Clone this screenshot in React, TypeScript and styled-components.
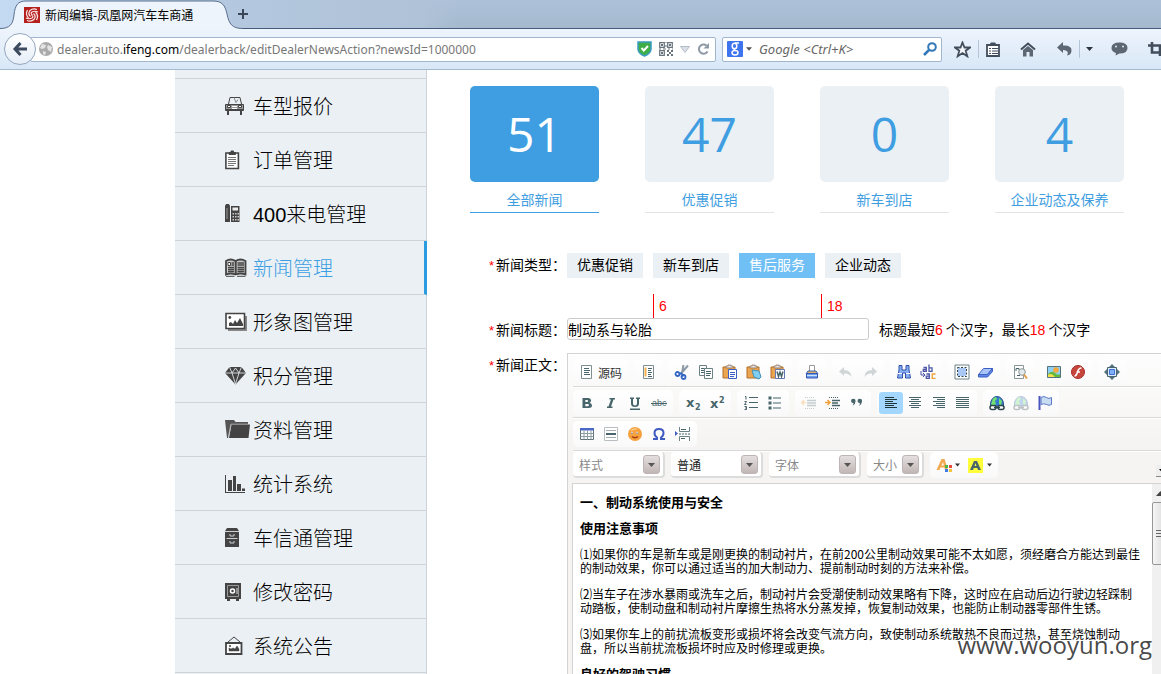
import React from "react";
import styled, { createGlobalStyle } from "styled-components";

const CJK = `"Noto Sans CJK SC", sans-serif`;

const GlobalStyle = createGlobalStyle`
  * { box-sizing: border-box; }
  body {
    margin: 0;
    background: #fff;
    color: #000;
    font-family: "Liberation Sans", ${CJK};
    font-size: 14px;
    overflow: hidden;
  }
  a { color: inherit; text-decoration: none; }
  button, input, select { font: inherit; color: inherit; margin: 0; }
  button { border: 0; padding: 0; background: none; cursor: pointer; }
  svg { display: block; flex: none; }
`;

/* ---------- browser frame ---------- */

const Browser = styled.div`
  height: 100vh;
  display: flex;
  flex-direction: column;
  overflow: hidden;
`;

const TabStrip = styled.div`
  flex: none;
  height: 29px;
  display: flex;
  align-items: stretch;
  background: linear-gradient(90deg, #c3daf2 0, #b3c7de 240px, #afc2d8 420px, rgba(175, 194, 216, 0) 460px),
    linear-gradient(#aec1da, #a4b9cd);
  border-bottom: 1px solid #455a7c;
`;

const Tab = styled.div`
  position: relative;
  width: 234px;
  height: 29px;
  padding-left: 24px;
  display: flex;
  align-items: center;
  gap: 5px;
  font-family: ${CJK};
  font-size: 12px;
`;

const TabShape = styled.svg`
  position: absolute;
  left: 0;
  top: 0;
`;

const TabIcon = styled.svg`
  position: relative;
`;

const TabTitle = styled.span`
  position: relative;
`;

const NewTab = styled.button`
  display: flex;
  align-items: center;
  padding: 0 4px;
`;

const NavBar = styled.div`
  flex: none;
  height: 41px;
  display: flex;
  align-items: center;
  padding-left: 4px;
  background: linear-gradient(#eef4fc, #d8e7f7);
  border-bottom: 1px solid #a6bbd0;
`;

const BackButton = styled.button`
  position: relative;
  z-index: 1;
  flex: none;
  width: 32px;
  height: 32px;
  border-radius: 50%;
  border: 1px solid #95a8bf;
  background: linear-gradient(#fff, #e6eef8);
  display: flex;
  align-items: center;
  justify-content: center;
`;

const Field = styled.div`
  height: 25px;
  display: flex;
  align-items: center;
  background: #fff;
  border: 1px solid #a2b6cd;
  border-radius: 2px;
  font-family: "Noto Sans", sans-serif;
  font-size: 12px;
  color: #777;
`;

const UrlField = styled(Field)`
  flex: 1;
  min-width: 0;
  margin-left: -6px;
  padding: 0 5px 0 8px;
  gap: 4px;
`;

const Url = styled.div`
  flex: 1;
  min-width: 0;
  overflow: hidden;
  white-space: nowrap;
  b { font-weight: 400; color: #000; }
`;

const UrlTools = styled.div`
  display: flex;
  align-items: center;
  gap: 7px;
`;

const SearchField = styled(Field)`
  flex: none;
  width: 220px;
  margin-left: 6px;
  padding: 0 4px;
  gap: 3px;
  font-size: 13px;
`;

const SearchInput = styled.input`
  flex: 1;
  min-width: 0;
  border: 0;
  padding: 0 0 0 4px;
  outline: 0;
  background: none;
  &::placeholder { color: #666; font-style: italic; opacity: 1; }
`;

const ToolIcons = styled.div`
  flex: none;
  width: 219px;
  padding-left: 12px;
  display: flex;
  align-items: center;
  overflow: hidden;
`;

const ToolButton = styled.button<{ $gap: number }>`
  flex: none;
  margin-right: ${(p) => p.$gap}px;
`;

const ToolDivider = styled.span<{ $gap: number }>`
  flex: none;
  width: 1px;
  height: 18px;
  background: #b4c5d8;
  margin-right: ${(p) => p.$gap}px;
`;

/* ---------- page ---------- */

const Viewport = styled.div`
  position: relative;
  flex: 1;
  min-height: 0;
  overflow: hidden;
`;

const Page = styled.div`
  min-width: 1176px;
  min-height: 100%;
  display: flex;
  padding-left: 175px;
`;

const Sidebar = styled.nav`
  flex: none;
  width: 252px;
  padding-top: 8px;
  background: #ebf0f4;
  border-right: 1px solid #d0d3d5;
`;

const MenuList = styled.ul`
  list-style: none;
  margin: 0 -1px 0 0;
  padding: 0;
  border-top: 1px solid #d0d3d5;
`;

const MenuLink = styled.a<{ $active?: boolean }>`
  display: grid;
  grid-template-columns: 28px 1fr;
  align-items: center;
  height: 54px;
  padding-left: 50px;
  border-bottom: 1px solid #d0d3d5;
  border-right: ${(p) => (p.$active ? "3px solid #2c9be0" : "0")};
  color: ${(p) => (p.$active ? "#3d9fe3" : "#000")};
  font-size: 20px;
  font-weight: 300;
`;

const Main = styled.main`
  flex: 1;
  min-width: 0;
  padding-top: 16px;
`;

const Cards = styled.div`
  display: flex;
  gap: 46px;
  padding-left: 43px;
`;

const Card = styled.a<{ $active?: boolean }>`
  flex: none;
  width: 129px;
  height: 127px;
  display: flex;
  flex-direction: column;
  color: #3f9ee1;
  text-align: center;
  line-height: 20px;
  border-bottom: 1px solid ${(p) => (p.$active ? "#3f9ee1" : "#e2e5e7")};
`;

const CardCount = styled.strong<{ $active?: boolean }>`
  height: 96px;
  margin-bottom: 8px;
  border-radius: 5px;
  background: ${(p) => (p.$active ? "#3f9ee1" : "#ebf0f4")};
  color: ${(p) => (p.$active ? "#fff" : "#3f9ee1")};
  font: 400 48px/96px "Open Sans", sans-serif;
`;

const FormGrid = styled.form`
  display: grid;
  grid-template-columns: 139px minmax(0, 1fr);
  column-gap: 1px;
  margin-top: 40px;
`;

const Caption = styled.label`
  height: 25px;
  line-height: 25px;
  text-align: right;
  white-space: nowrap;
  &::before { content: "*"; color: #f00; margin-right: 2px; font-size: 13px; }
`;

const TypeRow = styled.div`
  display: flex;
  gap: 10px;
  margin-bottom: 16px;
`;

const TypeButton = styled.button<{ $active?: boolean }>`
  width: 76px;
  height: 25px;
  line-height: 25px;
  background: ${(p) => (p.$active ? "#70c0f6" : "#ebf0f4")};
  color: ${(p) => (p.$active ? "#fff" : "#000")};
`;

const Ruler = styled.div`
  grid-column: 2;
  display: flex;
  height: 24px;
  padding-left: 86px;
`;

const RulerMark = styled.span`
  width: 168px;
  padding-left: 5px;
  border-left: 1px solid #f00;
  color: #f00;
  line-height: 25px;
`;

const TitleRow = styled.div`
  display: flex;
  align-items: center;
  gap: 10px;
  height: 22px;
  margin-bottom: 13px;
  white-space: nowrap;
  em { color: #f00; font-style: normal; margin-right: 3px; }
`;

const TitleInput = styled.input`
  width: 302px;
  height: 22px;
  padding: 0;
  border: 1px solid #ccc;
  border-radius: 3px;
  outline: 0;
`;

/* ---------- rich text editor ---------- */

const Editor = styled.div`
  height: 500px;
  display: flex;
  flex-direction: column;
  padding: 0 5px 5px 4px;
  border: 1px solid #d3d3d3;
  background: linear-gradient(#fdfdfd, #f5f4f2 90px);
`;

const ToolRow = styled.div<{ $last?: boolean }>`
  flex: none;
  display: flex;
  gap: 6px;
  height: 31px;
  padding-top: ${(p) => (p.$last ? 0 : 2)}px;
  margin: 0 -5px 0 1px;
  border-top: 1px solid #fff;
  border-bottom: ${(p) => (p.$last ? "0" : "1px solid #d9d9d9")};
  &:first-child { height: 33px; padding: 4px 0 0; }
  &:nth-child(3) { height: 33px; }
`;

const Group = styled.div`
  display: flex;
  height: 26px;
  padding: 2px;
  border-radius: 5px;
  background: linear-gradient(#fff, #f9f9f9);
`;

const EditorButton = styled.button<{ $on?: boolean; $off?: boolean }>`
  display: flex;
  align-items: center;
  gap: 3px;
  padding: 0 4px;
  border-radius: 3px;
  font-size: 12px;
  color: #333;
  background: ${(p) => (p.$on ? "#a3d7ff" : "none")};
  svg { opacity: ${(p) => (p.$off ? 0.3 : 1)}; }
`;

const Combo = styled.label<{ $width: number }>`
  position: relative;
  width: ${(p) => p.$width}px;
  height: 26px;
  border-radius: 4px;
  border-right: 2px solid #dcdcdc;
  border-bottom: 2px solid #dcdcdc;
  background: #fff;
`;

const ComboSelect = styled.select<{ $dark?: boolean }>`
  appearance: none;
  width: 100%;
  height: 24px;
  padding: 0 0 0 6px;
  border: 0;
  outline: 0;
  background: none;
  font-family: ${CJK};
  font-size: 12px;
  color: ${(p) => (p.$dark ? "#222" : "#888")};
`;

const ComboArrow = styled.span`
  position: absolute;
  top: 3px;
  right: 3px;
  width: 17px;
  height: 19px;
  padding: 7px 4px;
  border: 1px solid #bdb5b5;
  border-radius: 3px;
  background: linear-gradient(#e5dfdf, #c1b6b6);
  pointer-events: none;
`;

const Collapse = styled.button`
  display: flex;
  align-items: center;
  justify-content: center;
  width: 13px;
  height: 12px;
  margin: 13px 6px 0 auto;
  border-right: 1px solid #888;
  border-bottom: 1px solid #888;
  background: #eee;
`;

const EditArea = styled.div`
  flex: 1;
  min-height: 0;
  display: flex;
  margin-top: 1px;
  border: 1px solid #d3d3d3;
  background: #fff;
`;

const Article = styled.article`
  flex: 1;
  min-width: 0;
  padding: 11px 10px 11px 7px;
  overflow: hidden;
  font-family: ${CJK};
  font-size: 12px;
  line-height: 14px;
  p, h3 { margin: 0 0 12px; }
  h3 { font-size: 13px; line-height: 14px; }
`;

const ScrollTrack = styled.div`
  flex: none;
  width: 17px;
  display: flex;
  flex-direction: column;
  background: #f0f0f0;
`;

const ScrollArrow = styled.svg`
  margin: 7px 4px 6px;
`;

const ScrollThumb = styled.div`
  height: 63px;
  border: 1px solid #979797;
  border-radius: 2px;
  background: linear-gradient(90deg, #f5f5f5, #d5d5d5);
  display: flex;
  align-items: center;
  justify-content: center;
`;

const Watermark = styled.div`
  position: absolute;
  right: 9px;
  bottom: 13px;
  font: 400 24px/32px "Open Sans", sans-serif;
  color: rgba(50, 50, 50, 0.9);
  pointer-events: none;
`;

/* ---------- drawings ---------- */

const INK = "#444";

const menuIcons: Record<string, React.ReactNode> = {
  car: (
    <g fill="none" stroke={INK}>
      <path d="M3.500 8 5 1.500H15L16.500 8" />
      <path d="M9 1.500l2 5 2-3" stroke="#888" />
      <path d="M.5 8.500h18v5H.5z" fill="#999" />
      <path d="M.5 13.500h18v1H.5z" fill={INK} />
      <path d="M3 15v4M16 15v4" strokeWidth="2" />
      <path d="M7 10.500h5M7 12.500h5" stroke="#fff" />
      <path d="M2.500 9.500h3v2h-3zM13.500 9.500h3v2h-3z" fill="#fff" />
    </g>
  ),
  clipboard: (
    <g fill="none" stroke={INK}>
      <path d="M.9 3h12.500v15.500H.9z" strokeWidth="1.600" fill="#fff" />
      <path d="M4 4.500V2.500h2V1h2.500v1.500h2v2z" fill={INK} />
      <path d="M3 7.500h8M3 9.500h8M3 11.500h8M3 13.500h8M3 15.500h6" stroke="#777" />
    </g>
  ),
  phone: (
    <g>
      <path d="M0 2 1 0h3l1 2v16H0z" fill={INK} />
      <path d="M6 2h8.500v16H6z" fill={INK} />
      <path d="M7.500 3.500h5.500v3H7.500z" fill="#eee" />
      <path d="M7.500 9h1.500v1.500H7.500zM10 9h1.500v1.500H10zM12.500 9H14v1.500h-1.500zM7.500 12h1.500v1.500H7.500zM10 12h1.500v1.500H10zM12.500 12H14v1.500h-1.500zM7.500 15h1.500v1.500H7.500zM10 15h1.500v1.500H10zM12.500 15H14v1.500h-1.500z" fill="#ccc" />
      <path d="M2 4v11" stroke="#999" />
    </g>
  ),
  book: (
    <g fill="none" stroke={INK}>
      <path d="M1 3Q5.500 0 10.500 3 15.500 0 20.500 3v13.500Q15.500 14.500 10.500 16.500 5.500 14.500 1 16.500z" strokeWidth="1.800" fill="#ccc" />
      <path d="M10.700 2.500v14" strokeWidth="2" />
      <path d="M3 4.500h2.500v3H3z" fill="#fff" />
      <path d="M6.500 5H9M6.500 7H9M3 9.500h6M3 11.500h6M3 13.500h6M12.500 5H19M12.500 7H19M12.500 9.500H19M12.500 11.500H19M12.500 13.500H19" strokeWidth="1.300" />
      <path d="M1 18.300h8.500M12 18.300h8.500" />
    </g>
  ),
  image: (
    <g>
      <path d="M3 4h19v15H3z" fill="#888" />
      <path d="M1 1.500h18.500v15H1z" fill="#fff" stroke={INK} strokeWidth="1.600" />
      <path d="M4 14v-3l2-1 2 2 2-4 2 3 3-5 3 6v2z" fill={INK} />
      <circle cx="4.800" cy="5.500" r="1.400" fill={INK} />
    </g>
  ),
  gem: (
    <g>
      <path d="M4.500 1h12L21 7 10.500 18.500 0 7z" fill={INK} />
      <path d="M0 7h21M4.500 1 7 7l3.500 11L14 7l2.500-6M7 7l3.500-5L14 7" fill="none" stroke="#dde2e6" strokeWidth=".9" />
    </g>
  ),
  folder: (
    <g>
      <path d="M0 0h9l1.500 2H23v3H6L3 18H2z" fill="#555" />
      <path d="M6.500 4.500H25L23.500 18H4z" fill={INK} />
      <path d="M3.500 17 5.800 4.200H23" stroke="#bbb" fill="none" strokeWidth=".8" />
    </g>
  ),
  chart: (
    <g fill={INK}>
      <path d="M0 1h1v18H0zM0 18h20v1H0zM3 6h4v11H3zM8 2h3v15H8zM12 10h4v7h-4zM17 14.500h3V17h-3z" />
    </g>
  ),
  cabinet: (
    <g>
      <path d="M0 3 2 0h10l2 3v16H0z" fill={INK} />
      <path d="M0 3.500h14M1.500 10.500h11M5 6v2h4V6M5 13v2h4v-2" fill="none" stroke="#ccd0d3" />
    </g>
  ),
  safe: (
    <g>
      <path d="M0 1h16v16H0zM2 17h3v2H2zM11 17h3v2h-3z" fill={INK} />
      <path d="M2.500 3.500h11v11h-11z" fill="none" stroke="#999" />
      <circle cx="7.500" cy="9" r="2" fill="none" stroke="#fff" strokeWidth="1.500" />
      <path d="M12 6v6" stroke="#ddd" />
    </g>
  ),
  frame: (
    <g fill="none" stroke={INK}>
      <path d="M3 6 9 1l6 5" />
      <path d="M1 7h15.500v11H1z" strokeWidth="1.800" fill="#fff" />
      <path d="M4 15v-3l2 1 2-1 2 1 2-3 2 3v2z" fill={INK} strokeWidth=".5" />
      <circle cx="5" cy="10" r=".7" />
    </g>
  ),
};

const MenuIcon = ({ name }: { name: string }) => (
  <svg width="26" height="20" viewBox="0 0 26 20">{menuIcons[name]}</svg>
);

const SLATE = "#47656a";
const doc = (
  <>
    <path d="M2.500 1.500h10v13h-10z" fill="#fff" stroke="#7d8f92" />
    <path d="M5 4.500h5M5 6.500h6M5 8.500h5M5 10.500h6" stroke={SLATE} />
  </>
);
const pasteBoard = (
  <>
    <path d="M1 3h12v11H1z" fill="#e9a550" stroke="#b36f2b" />
    <path d="M4 4V2h2V1h3v1h2v2z" fill="#ddd" stroke="#8a6a4a" strokeWidth=".7" />
  </>
);
const chain = (
  <g fill="#fff" stroke="#2c4548" strokeWidth="1.500">
    <rect x="1" y="10.500" width="6" height="4" rx="2" />
    <rect x="9" y="10.500" width="6" height="4" rx="2" />
    <path d="M5 12.500h6" />
  </g>
);
const globe = (
  <>
    <path d="M1.500 9a6.500 7.500 0 0 1 13 0v2h-13z" fill="#3779cf" stroke="#28508f" />
    <path d="M4 3.500 7 2l1 2-2 2 1 3-3 2-2-2zM10 3l3 3-1 5-2-2z" fill="#71e06f" />
  </>
);

const editorIcons: Record<string, React.ReactNode> = {
  source: doc,
  template: (
    <>
      <path d="M3.500 1.500h10v13h-10z" fill="#fff" stroke="#7d8f92" />
      <path d="M4.500 3.500h2v9h-2z" fill="#f2b04e" />
      <path d="M8 4.500h4M8 6.500h3M8 8.500h4M8 10.500h3M8 12.500h4" stroke={SLATE} />
    </>
  ),
  cut: (
    <g fill="none">
      <path d="M7.500 9 14 1.500M8 9 9.500 1" stroke="#8c9aa5" strokeWidth="2" />
      <path d="M8 9 5 10M8 9.500l1 3" stroke="#3566c4" strokeWidth="2" />
      <circle cx="3.500" cy="10" r="2" stroke="#3566c4" strokeWidth="1.800" />
      <circle cx="9.500" cy="13" r="2" stroke="#3566c4" strokeWidth="1.800" />
    </g>
  ),
  copy: (
    <>
      <path d="M1.500 1.500h7v10h-7z" fill="#fff" stroke="#6c8286" />
      <path d="M3 4.500h4M3 6.500h3M3 8.500h3" stroke={SLATE} />
      <path d="M6.500 4.500h8v10h-8z" fill="#fff" stroke="#6c8286" />
      <path d="M8 7.500h5M8 9.500h5M8 11.500h4" stroke={SLATE} />
    </>
  ),
  paste: (
    <>
      {pasteBoard}
      <path d="M6.500 5.500h8v9h-8z" fill="#fff" stroke="#3c5fc4" />
      <path d="M8 8.500h5M8 10.500h5M8 12.500h4" stroke="#3c5fc4" />
    </>
  ),
  pasteText: (
    <>
      {pasteBoard}
      <path d="m6 6 7 1 2 6-2 2-5-2z" fill="#7fcdef" stroke="#4592b4" />
    </>
  ),
  pasteWord: (
    <>
      {pasteBoard}
      <path d="M5.500 5.500h9v9h-9z" fill="#fff" stroke="#6379b5" />
      <path d="m7 7.500 1.500 5L10 8l1.500 4.500 1.500-5" fill="none" stroke={SLATE} strokeWidth="1.500" />
    </>
  ),
  print: (
    <>
      <path d="M5.500 1.500h5v6h-5z" fill="#fff" stroke="#999" />
      <path d="M4 7h8l2 3H2z" fill="#d9b26c" stroke="#3b61b8" />
      <path d="M2.500 9.500h11v4.500h-11z" fill="#6f9dec" stroke="#3459b5" />
      <path d="M3 11.500h10" stroke="#cfe0fb" />
    </>
  ),
  undo: <path d="M1 7.500 6 3v3q7 0 7.500 7Q11 9 6 9.500V12z" fill="#6d7f82" />,
  redo: <path d="M15 7.500 10 3v3q-7 0-7.500 7Q5 9 10 9.500V12z" fill="#6d7f82" />,
  find: (
    <>
      <path d="M3 1.500h3V6h4V1.500h3V6l1.500 8h-5V9h-3v5h-5L3 6z" fill="#86aef2" stroke="#3150a8" />
      <path d="M2 9.500h4M10 9.500h4" stroke="#fff" />
    </>
  ),
  replace: (
    <g fill="none" stroke="#4a55a8" strokeWidth="1.300">
      <path d="M3.500 3.500h2.800v3.800H3.300V5.500h3M9 .5v6.800h3V3.800H9" />
      <path d="M6.500 10h2.800v4.300H6.300v-2.200h3" />
      <path d="M15.500 10h-3.300v4.300h3.300" stroke="#f0a136" />
      <path d="M1 7v4h3.500M3 9l2 2-2 2" strokeWidth="1" />
    </g>
  ),
  selectAll: (
    <>
      <path d="M1 1h14v14H1z" fill="#fff" stroke="#6c8286" />
      <path d="M4 4h8v8H4z" fill="#a9c7f5" />
      <path d="M3.500 3.500h9v9h-9z" fill="none" stroke="#2d4447" strokeDasharray="2 1.500" />
    </>
  ),
  eraser: (
    <>
      <path d="M5.500 4.500h9l-5 6h-9z" fill="#a9c4f8" stroke="#3c5fc4" />
      <path d="M.5 10.500h9l5-6v3l-5 5.500h-9z" fill="#5f87e6" stroke="#3c5fc4" />
    </>
  ),
  preview: (
    <>
      <path d="M2.500 1.500h9v13h-9z" fill="#fff" stroke="#8b9698" />
      <path d="M4 7V4.500h3V6M5 11.500h3" stroke={SLATE} fill="none" />
      <circle cx="10" cy="8" r="3.300" fill="#e4eaec" stroke="#8b9698" />
      <path d="m12 10.500 3 4" stroke="#e2a04b" strokeWidth="2" />
    </>
  ),
  picture: (
    <>
      <path d="M1.500 2.500h13v11h-13z" fill="#8fd0f5" stroke="#55717a" />
      <circle cx="10" cy="6" r="2.800" fill="#f9a93b" />
      <path d="M2 10Q6 6 9 9t5 1v3H2z" fill="#63b93e" />
      <path d="M2 10.500q4-2 7 2.500H2z" fill="#f4e04d" />
    </>
  ),
  flash: (
    <>
      <circle cx="8" cy="8" r="6.500" fill="#c8453b" stroke="#a52f2a" />
      <path d="M11.500 4Q8.500 4 7.500 8 6.500 12 4.500 12M6.500 8H10" fill="none" stroke="#fff" strokeWidth="1.500" />
    </>
  ),
  maximize: (
    <>
      <path d="M8 0l3 3H5zM8 16l3-3H5zM0 8l3-3v6zM16 8l-3-3v6z" fill="#55717a" />
      <path d="M3.500 3.500h9v9h-9z" fill="#dcebff" stroke="#47656a" />
      <path d="M5.500 5.500h5v5h-5z" fill="#7fb0f5" stroke="#3c6fd0" />
    </>
  ),
  bold: <path d="M3.500 3h5.500q3 0 3 2.500 0 1.700-1.500 2.300Q13 8.500 13 10.500 13 13 9.500 13h-6zM6.300 5v2H8q1.200 0 1.200-1T8 5zm0 4v2.200h2Q10 11.200 10 10T8.300 9z" fill={SLATE} fillRule="evenodd" />,
  italic: <path d="M6.500 3H12v1.500h-1.500l-2.500 7h1.500V13H4v-1.500h1.500l2.500-7H6.500z" fill={SLATE} />,
  underline: <path d="M3 2.500h4V4H6v4.500q0 2 2 2t2-2V4H9V2.500h4V4h-1v4.500Q12 12 8 12T4 8.500V4H3zM3 13.500h10V15H3z" fill={SLATE} />,
  strike: (
    <g fontFamily="Liberation Sans, sans-serif" fontSize="9" fill={SLATE}>
      <text x="1" y="11">abc</text>
      <path d="M0 8h16v1H0z" />
    </g>
  ),
  sub: (
    <g fontFamily="DejaVu Sans, sans-serif" fontWeight="700" fill={SLATE}>
      <text x="1" y="12" fontSize="13">x</text>
      <text x="10" y="15" fontSize="8">2</text>
    </g>
  ),
  sup: (
    <g fontFamily="DejaVu Sans, sans-serif" fontWeight="700" fill={SLATE}>
      <text x="1" y="13" fontSize="13">x</text>
      <text x="10" y="8" fontSize="8">2</text>
    </g>
  ),
  ordered: (
    <g fill="none" stroke={SLATE}>
      <path d="M6 2.500h9M6 7.500h9M6 12.500h9" />
      <path d="M2 1.500h1v3M1.500 6.500h2L1.500 9.500h2M1.500 11.500h2v1.500h-1 1v1.500h-2" />
    </g>
  ),
  bullets: <path d="M1.500 1.500h3v3h-3zM1.500 6.500h3v3h-3zM1.500 11.500h3v3h-3zM6 2.500h8v1H6zM6 7.500h8v1H6zM6 12.500h8v1H6z" fill={SLATE} />,
  outdent: (
    <>
      <path d="M5 7.500H0M3 5 .5 7.500 3 10" fill="none" stroke="#f2a13c" strokeWidth="1.500" />
      <path d="M6 5.500h9M6 8h9M6 10.500h9" stroke={SLATE} strokeWidth="1.500" />
      <path d="M4 2.500h10M4 13.500h10" stroke={SLATE} strokeDasharray="1 1" />
    </>
  ),
  indent: (
    <>
      <path d="M0 7.500h5M2.500 5 5 7.500 2.500 10" fill="none" stroke="#f2a13c" strokeWidth="1.500" />
      <path d="M7 5.500h8M7 8h6M7 10.500h8" stroke={SLATE} strokeWidth="1.500" />
      <path d="M4 2.500h10M4 13.500h10" stroke={SLATE} strokeDasharray="1 1" />
    </>
  ),
  quote: <path d="M2 6a2.300 2.300 0 1 1 4.600 0Q6.600 9 3.500 11q1-1.500 1-2.800Q2 8 2 6zM8.500 6a2.300 2.300 0 1 1 4.600 0q0 3-3.100 5 1-1.500 1-2.800Q8.500 8 8.500 6z" fill={SLATE} />,
  left: <path d="M2 2.500h9M2 4.500h12M2 6.500h8M2 8.500h12M2 10.500h9M2 12.500h12" stroke="#1f3538" />,
  center: <path d="M2 2.500h12M4 4.500h8M2 6.500h12M4 8.500h8M2 10.500h12M4 12.500h8" stroke={SLATE} />,
  right: <path d="M2 2.500h12M6 4.500h8M2 6.500h12M5 8.500h9M2 10.500h12M6 12.500h8" stroke={SLATE} />,
  justify: <path d="M1 2.500h13M1 4.500h13M1 6.500h13M1 8.500h13M1 10.500h13M1 12.500h13" stroke={SLATE} />,
  link: <>{globe}{chain}</>,
  unlink: <>{globe}{chain}</>,
  anchor: (
    <>
      <path d="M2.500 1v14" stroke="#4a55c0" strokeWidth="2" />
      <path d="M4 2.500q3-2 5.500 0t5 0v7q-2.500 1.500-5 0T4 9.500z" fill="#c8dcf2" stroke="#5b78c8" />
    </>
  ),
  table: (
    <>
      <path d="M1.500 2.500h13v11h-13z" fill="#fff" stroke="#5d7478" />
      <path d="M1 2h14v2.500H1z" fill="#4a68c8" />
      <path d="M1.500 7.500h13M1.500 10.500h13M5 4.500v9M8.500 4.500v9M12 4.500v9" stroke="#8d9fa2" />
    </>
  ),
  rule: (
    <>
      <path d="M1.500 1.500h13v13h-13z" fill="#fff" stroke="#b9bfc0" />
      <path d="M3 4.500h10M3 11.500h10" stroke="#a5adae" />
      <path d="M3 7h10v2H3z" fill={SLATE} />
    </>
  ),
  smiley: (
    <>
      <circle cx="8" cy="8" r="7" fill="#f7a13c" />
      <path d="M3 5a6 6 0 0 1 8-2Q6 4 3 5z" fill="#fbcf94" />
      <circle cx="5" cy="7" r="1.200" fill="#fff" />
      <circle cx="10" cy="7" r="1.200" fill="#fff" />
      <path d="M4.500 6.500h1v1.500h-1zM9.500 6.500h1v1.500h-1z" fill="#5a3010" />
      <path d="M5 10.500q3 2.500 6 0" fill="none" stroke="#a33a12" strokeWidth="1.500" />
    </>
  ),
  omega: <path d="M2 13h4v-1.500Q3.500 10 3.500 7 3.500 3 8 3t4.500 4q0 3-2.500 4.500V13h4" fill="none" stroke="#3f5cc0" strokeWidth="2" />,
  pageBreak: (
    <>
      <path d="M4.500 1v4.500h10V1M4.500 15v-4.500h10V15" fill="#fff" stroke="#6c8286" />
      <path d="M4 8h11" stroke={SLATE} strokeDasharray="2 1" />
      <path d="M6 3.500h5M6 12.500h4" stroke={SLATE} />
      <path d="m0 5 3 2.500L0 10z" fill="#3f5cc0" />
    </>
  ),
  textColor: (
    <>
      <path d="m.5 13 5-11h3l3.500 11H9l-.7-2.500H4.500L3.500 13zM5.500 8.500h2.300L7 5z" fill="#f2a950" fillRule="evenodd" />
      <path d="M9 8h3v3H9z" fill="#4ab54a" />
      <path d="M13 8h3v3h-3z" fill="#e5483c" />
      <path d="M9 12h3v3H9z" fill="#3c7be5" />
      <path d="M13 12h3v3h-3z" fill="#f2c33c" />
    </>
  ),
  bgColor: (
    <>
      <path d="M0 1h15v15H0z" fill="#ffff3c" />
      <path d="M2 13 6 4h3l4 9h-3l-.7-2H5.700L5 13zM6.500 9h2L7.500 6z" fill={SLATE} fillRule="evenodd" />
    </>
  ),
};

const EditorIcon = ({ name }: { name: string }) => (
  <svg width="16" height="16" viewBox="0 0 16 16">{editorIcons[name]}</svg>
);

const Caret = ({ color = "#333", size = 7 }: { color?: string; size?: number }) => (
  <svg width={size} height="4" viewBox="0 0 7 4"><path d="M0 0h7L3.500 4z" fill={color} /></svg>
);

/* ---------- data ---------- */

const menu = [
  ["car", "车型报价"],
  ["clipboard", "订单管理"],
  ["phone", "400来电管理"],
  ["book", "新闻管理"],
  ["image", "形象图管理"],
  ["gem", "积分管理"],
  ["folder", "资料管理"],
  ["chart", "统计系统"],
  ["cabinet", "车信通管理"],
  ["safe", "修改密码"],
  ["frame", "系统公告"],
];

const cards: [number, string][] = [
  [51, "全部新闻"],
  [47, "优惠促销"],
  [0, "新车到店"],
  [4, "企业动态及保养"],
];

const types = ["优惠促销", "新车到店", "售后服务", "企业动态"];

const toolRows: string[][][] = [
  [["source"], ["template"], ["cut", "copy", "paste", "pasteText", "pasteWord"], ["print"], ["undo", "redo"], ["find", "replace"], ["selectAll", "eraser"], ["preview"], ["picture", "flash"], ["maximize"]],
  [["bold", "italic", "underline", "strike"], ["sub", "sup"], ["ordered", "bullets"], ["outdent", "indent", "quote"], ["left", "center", "right", "justify"], ["link", "unlink", "anchor"]],
  [["table", "rule", "smiley", "omega", "pageBreak"]],
];
const disabled = ["undo", "redo", "outdent", "unlink"];

const combos: [string, number][] = [["样式", 92], ["普通", 92], ["字体", 92], ["大小", 57]];

/* ---------- app ---------- */

const Chrome = () => (
  <>
    <TabStrip>
      <Tab>
        <TabShape width="244" height="29" viewBox="0 0 244 29">
          <path d="M0 28.500C10 28.500 13 24 14 15 15 5 18 1 26 1H213C222 1 225 5 227 14 229 24 232 28.500 243 28.500V29H0z" fill="#eef4fc" />
          <path d="M0 28.500C10 28.500 13 24 14 15 15 5 18 1 26 1H213C222 1 225 5 227 14 229 24 232 28.500 243 28.500" fill="none" stroke="#5b6f8e" />
        </TabShape>
        <TabIcon width="16" height="16" viewBox="0 0 16 16">
          <path d="M0 0h16v16H0z" fill="#b5201d" />
          <g fill="none" stroke="#fbe9e8" strokeWidth="1.200">
            <path d="M8.500 8Q6 6.500 8 5q3-1.500 6 0M7.500 8q2.500 1.500.5 3-3 1.500-6 0" />
            <path d="M6.500 9.500Q3.500 7 6 3.500 9 1 13 2.500M9.500 6.500Q12.500 9 10 12.500 7 15 3 13.500" />
            <path d="M4.500 11Q1 7.500 3.500 3M11.500 5Q15 8.500 12.500 13" />
          </g>
        </TabIcon>
        <TabTitle>新闻编辑-凤凰网汽车车商通</TabTitle>
      </Tab>
      <NewTab aria-label="新建标签页">
        <svg width="10" height="10" viewBox="0 0 10 10"><path d="M5 0v10M0 5h10" stroke="#3b4656" strokeWidth="2" /></svg>
      </NewTab>
    </TabStrip>
    <NavBar>
      <BackButton aria-label="后退">
        <svg width="16" height="16" viewBox="0 0 16 16"><path d="M8.500 2 3 8l5.500 6M3 8h12" fill="none" stroke="#3c4b5e" strokeWidth="3" /></svg>
      </BackButton>
      <UrlField>
        <svg width="14" height="14" viewBox="0 0 14 14">
          <circle cx="7" cy="7" r="7" fill="#aaa" />
          <path d="M3 2l4 1-1 3-3 1-2-1zM9 3l4 2-1 5-3-2-1-3zM4 9l3 1-1 3-2-1z" fill="#e4e4e4" />
        </svg>
        <Url role="textbox" aria-label="地址">dealer.auto.<b>ifeng.com</b>/dealerback/editDealerNewsAction?newsId=1000000</Url>
        <UrlTools>
          <svg width="15" height="16" viewBox="0 0 15 16">
            <path d="M1 1h13v7q0 4.500-6.500 7Q1 12.500 1 8z" fill="#3fae49" stroke="#3a9cc0" strokeWidth="1.500" />
            <path d="m4.500 7 2.300 2.500L11 5" fill="none" stroke="#fff" strokeWidth="2" />
          </svg>
          <svg width="14" height="14" viewBox="0 0 14 14">
            <path d="M.7.7h4.600v4.600H.7zM8.700.7h4.600v4.600H8.700zM.7 8.700h4.600v4.600H.7z" fill="none" stroke="#68737c" strokeWidth="1.200" />
            <path d="M2 2h2v2H2zM10 2h2v2h-2zM2 10h2v2H2zM6.500 0v1h1V0zM6.500 3v2h1V3zM0 6.500h2v1H0zM4 6.500h3v1H4zM9 6.500h2v1H9zM13 6.500h1v1h-1zM8 8h2v2H8zM12 8h2v2h-2zM10 10h2v2h-2zM8 12h2v2H8zM12 12h2v2h-2z" fill="#68737c" />
          </svg>
          <svg width="10" height="7" viewBox="0 0 10 7"><path d="M.5.5h9L5 6.500z" fill="#dbe0e8" stroke="#b4bcc8" /></svg>
          <svg width="13" height="12" viewBox="0 0 13 12">
            <path d="M10.500 8.500A4.600 4.600 0 1 1 9.500 2.600" fill="none" stroke="#8e99a6" strokeWidth="2" />
            <path d="M12 0v5.500H6.500z" fill="#8e99a6" />
          </svg>
        </UrlTools>
      </UrlField>
      <SearchField>
        <svg width="16" height="16" viewBox="0 0 16 16">
          <rect width="16" height="16" rx="1" fill="#3f74f0" />
          <g fill="none" stroke="#fff" strokeWidth="1.500">
            <ellipse cx="7.500" cy="5" rx="2.300" ry="2.800" />
            <path d="M8 2h4M8 7.500q-2 1 .5 2.200" />
            <ellipse cx="8" cy="11.700" rx="3" ry="2.200" />
          </g>
        </svg>
        <Caret color="#555" size={6} />
        <SearchInput aria-label="搜索" placeholder="Google <Ctrl+K>" />
        <svg width="14" height="14" viewBox="0 0 14 14">
          <circle cx="9" cy="5" r="3.800" fill="none" stroke="#3178b8" strokeWidth="2" />
          <path d="M6 8 1 13" stroke="#3178b8" strokeWidth="2.500" />
        </svg>
      </SearchField>
      <ToolIcons>
        <ToolButton $gap={7} aria-label="收藏">
          <svg width="17" height="17" viewBox="0 0 17 17"><path d="m8.500 1.500 2 5H16l-4.300 3.200 1.600 5.600-4.800-3.300-4.800 3.300 1.600-5.600L1 6.500h5.500z" fill="#f4f8fc" stroke="#434e5c" strokeWidth="1.800" /></svg>
        </ToolButton>
        <ToolDivider $gap={7} />
        <ToolButton $gap={20} aria-label="书签">
          <svg width="14" height="15" viewBox="0 0 14 15"><path d="M1 3h12v11H1z" fill="#fff" stroke="#434e5c" strokeWidth="1.800" /><path d="M3 3 5 .5h4L11 3z" fill="#434e5c" /><path d="M3 6.500h2M6 6.500h6M3 9h2M6 9h6M3 11.500h2M6 11.500h6" stroke="#434e5c" /></svg>
        </ToolButton>
        <ToolButton $gap={21} aria-label="主页">
          <svg width="16" height="15" viewBox="0 0 16 15"><path d="m1 7.500 7-6 7 6" fill="none" stroke="#434e5c" strokeWidth="2" /><path d="M3 8l5-4 5 4v6.500H9.500V10h-3v4.500H3z" fill="#5c6773" /></svg>
        </ToolButton>
        <ToolButton $gap={7} aria-label="撤销">
          <svg width="15" height="14" viewBox="0 0 15 14"><path d="M0 5.500 6 0v3.500q9-.5 8.500 5.500-.5 4-4.500 4.500 3-5-4-5.500V11z" fill="#5c6773" /></svg>
        </ToolButton>
        <ToolDivider $gap={6} />
        <ToolButton $gap={18} aria-label="更多"><Caret color="#2c3541" /></ToolButton>
        <ToolButton $gap={20} aria-label="聊天">
          <svg width="17" height="14" viewBox="0 0 17 14"><path d="M8.500.5q8 0 8 5.500t-8 5.500l-4 2 .5-2.500Q.5 9.500.5 6q0-5.500 8-5.500z" fill="#5c6773" /><circle cx="5" cy="4.500" r="1" fill="#dfe8f2" /><circle cx="12" cy="4.500" r="1" fill="#dfe8f2" /></svg>
        </ToolButton>
        <ToolButton $gap={0} aria-label="截图">
          <svg width="16" height="14" viewBox="0 0 16 14"><path d="M0 3.500h12V14M4 0v10.500h12" fill="none" stroke="#434e5c" strokeWidth="2.600" /></svg>
        </ToolButton>
      </ToolIcons>
    </NavBar>
  </>
);

const NewsEditor = () => (
  <Editor>
    {toolRows.map((groups, r) => (
      <ToolRow key={r}>
        {groups.map((names) => (
          <Group key={names[0]}>
            {names.map((name) => (
              <EditorButton key={name} type="button" aria-label={name} $on={name === "left"} $off={disabled.includes(name)}>
                <EditorIcon name={name} />
                {name === "source" && "源码"}
              </EditorButton>
            ))}
          </Group>
        ))}
      </ToolRow>
    ))}
    <ToolRow $last>
      {combos.map(([label, width]) => (
        <Combo key={label} $width={width}>
          <ComboSelect aria-label={label} $dark={label === "普通"}><option>{label}</option></ComboSelect>
          <ComboArrow><Caret color="#555" /></ComboArrow>
        </Combo>
      ))}
      <Group>
        <EditorButton type="button" aria-label="文本颜色"><EditorIcon name="textColor" /><Caret size={5} /></EditorButton>
        <EditorButton type="button" aria-label="背景颜色"><EditorIcon name="bgColor" /><Caret size={5} /></EditorButton>
      </Group>
      <Collapse type="button" aria-label="折叠工具栏"><Caret color="#000" /></Collapse>
    </ToolRow>
    <EditArea>
      <Article>
        <h3>一、制动系统使用与安全</h3>
        <h3>使用注意事项</h3>
        <p>⑴如果你的车是新车或是刚更换的制动衬片，在前200公里制动效果可能不太如愿，须经磨合方能达到最佳的制动效果，你可以通过适当的加大制动力、提前制动时刻的方法来补偿。</p>
        <p>⑵当车子在涉水暴雨或洗车之后，制动衬片会受潮使制动效果略有下降，这时应在启动后边行驶边轻踩制动踏板，使制动盘和制动衬片摩擦生热将水分蒸发掉，恢复制动效果，也能防止制动器零部件生锈。</p>
        <p>⑶如果你车上的前扰流板变形或损坏将会改变气流方向，致使制动系统散热不良而过热，甚至烧蚀制动盘，所以当前扰流板损坏时应及时修理或更换。</p>
        <h3>良好的驾驶习惯</h3>
      </Article>
      <ScrollTrack>
        <ScrollArrow width="9" height="5" viewBox="0 0 9 5"><path d="M0 5 4.500 0 9 5z" fill="#444" /></ScrollArrow>
        <ScrollThumb>
          <svg width="9" height="8" viewBox="0 0 9 8"><path d="M0 .5h9M0 3.500h9M0 6.500h9" stroke="#666" /></svg>
        </ScrollThumb>
      </ScrollTrack>
    </EditArea>
  </Editor>
);

export default function App() {
  return (
    <Browser>
      <GlobalStyle />
      <Chrome />
      <Viewport>
        <Page>
          <Sidebar>
            <MenuList>
              {menu.map(([icon, label]) => (
                <li key={label}>
                  <MenuLink href="#" $active={icon === "book"}>
                    <MenuIcon name={icon} />
                    {label}
                  </MenuLink>
                </li>
              ))}
            </MenuList>
          </Sidebar>
          <Main>
            <Cards>
              {cards.map(([count, label], i) => (
                <Card key={label} href="#" $active={i === 0}>
                  <CardCount $active={i === 0}>{count}</CardCount>
                  {label}
                </Card>
              ))}
            </Cards>
            <FormGrid>
              <Caption as="span">新闻类型：</Caption>
              <TypeRow>
                {types.map((t) => (
                  <TypeButton key={t} type="button" $active={t === "售后服务"}>{t}</TypeButton>
                ))}
              </TypeRow>
              <Ruler>
                <RulerMark>6</RulerMark>
                <RulerMark>18</RulerMark>
              </Ruler>
              <Caption htmlFor="news-title">新闻标题：</Caption>
              <TitleRow>
                <TitleInput id="news-title" defaultValue="制动系与轮胎" />
                <span>标题最短<em>6</em>个汉字，最长<em>18</em>个汉字</span>
              </TitleRow>
              <Caption as="span">新闻正文：</Caption>
              <NewsEditor />
            </FormGrid>
          </Main>
        </Page>
        <Watermark>www.wooyun.org</Watermark>
      </Viewport>
    </Browser>
  );
}
